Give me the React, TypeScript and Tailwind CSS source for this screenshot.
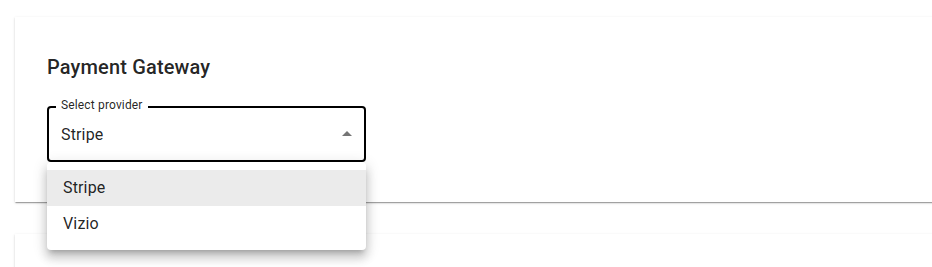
const providers = ["Stripe", "Vizio"];

const ArrowUp = () => (
  <svg viewBox="0 0 24 24" className="w-6 h-6 fill-[rgba(0,0,0,0.54)]">
    <path d="M7 14l5-5 5 5z" />
  </svg>
);

const ProviderSelect = ({ value }: { value: string }) => {
  return (
    <div className="relative w-[319px]">
      <div className="relative h-[56px] rounded-[4px] border-2 border-black flex items-center pl-[12px] pr-[5px]">
        <span className="absolute -top-[11px] left-[7px] px-[5px] bg-white text-[12px] leading-[16px] tracking-[0.15px] text-[rgba(0,0,0,0.87)]">
          Select provider
        </span>
        <span className="flex-1 text-[16px] leading-[23px] tracking-[0.15px] text-[rgba(0,0,0,0.87)]">
          {value}
        </span>
        <ArrowUp />
      </div>

      {/* open menu */}
      <ul className="absolute left-0 top-[56px] w-full z-10 bg-white rounded-[4px] py-2 shadow-[0px_5px_5px_-3px_rgba(0,0,0,0.2),0px_8px_10px_1px_rgba(0,0,0,0.14),0px_3px_14px_2px_rgba(0,0,0,0.12)]">
        {providers.map((p) => (
          <li
            key={p}
            className={`h-[36px] flex items-center px-4 text-[16px] tracking-[0.15px] text-[rgba(0,0,0,0.87)] ${
              p === value ? "bg-[rgba(0,0,0,0.08)]" : ""
            }`}
          >
            {p}
          </li>
        ))}
      </ul>
    </div>
  );
};

export default function App() {
  return (
    <div
      className="h-[267px] bg-white overflow-hidden pt-[17px] pl-[15px]"
      style={{ fontFamily: "Roboto, 'Noto Sans', sans-serif" }}
    >
      <div className="w-[960px] bg-white shadow-[0px_2px_1px_-1px_rgba(0,0,0,0.2),0px_1px_1px_0px_rgba(0,0,0,0.14),0px_1px_3px_0px_rgba(0,0,0,0.12)] pt-[34px] pb-[40px] px-8">
        <h2 className="text-[20px] leading-[32px] font-medium tracking-[0.15px] text-[rgba(0,0,0,0.87)]">
          Payment Gateway
        </h2>
        <div className="mt-[23px]">
          <ProviderSelect value="Stripe" />
        </div>
      </div>

      <div className="mt-[32px] w-[960px] h-[120px] bg-white shadow-[0px_2px_1px_-1px_rgba(0,0,0,0.2),0px_1px_1px_0px_rgba(0,0,0,0.14),0px_1px_3px_0px_rgba(0,0,0,0.12)]" />
    </div>
  );
}
